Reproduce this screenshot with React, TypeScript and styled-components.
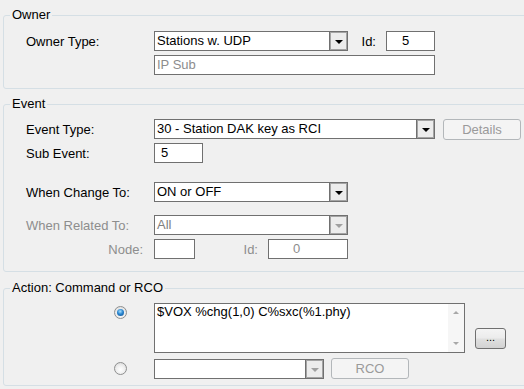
import React from "react";
import styled, { createGlobalStyle } from "styled-components";

const GlobalStyle = createGlobalStyle`
  html, body {
    margin: 0;
    padding: 0;
    background: #f0f0f0;
  }
  body {
    font-family: "Liberation Sans", Arial, sans-serif;
    font-size: 13px;
    color: #000;
    overflow: hidden;
  }
`;

const Page = styled.div`
  width: 524px;
  height: 389px;
  overflow: hidden;
  padding-left: 3px;
  box-sizing: border-box;
`;

const Group = styled.fieldset<{ $top: number; $pt: number; $pb: number }>`
  box-sizing: border-box;
  width: 530px;
  min-inline-size: 0;
  margin: ${(p) => p.$top}px 0 0 0;
  padding: ${(p) => p.$pt}px 0 ${(p) => p.$pb}px 6px;
  border: 1px solid #d5dfe5;
  border-radius: 3px;
`;

const Legend = styled.legend`
  padding: 0 2px;
  line-height: 16px;
  font-size: 13px;
  color: #000;
`;

const Row = styled.div<{ $mt?: number; $h?: number }>`
  display: flex;
  align-items: center;
  height: ${(p) => (p.$h ? `${p.$h}px` : "auto")};
  margin-top: ${(p) => p.$mt ?? 0}px;
`;

const Label = styled.span<{ $disabled?: boolean; $right?: boolean }>`
  flex: none;
  width: 144px;
  box-sizing: border-box;
  padding-left: ${(p) => (p.$right ? 0 : 16)}px;
  padding-right: ${(p) => (p.$right ? 11 : 0)}px;
  text-align: ${(p) => (p.$right ? "right" : "left")};
  color: ${(p) => (p.$disabled ? "#8d8d8d" : "#000")};
  white-space: nowrap;
`;

const SideLabel = styled.span<{ $w: number; $disabled?: boolean }>`
  flex: none;
  width: ${(p) => p.$w}px;
  box-sizing: border-box;
  padding-right: 10px;
  text-align: right;
  color: ${(p) => (p.$disabled ? "#8d8d8d" : "#000")};
`;

const Field = styled.div<{ $w: number; $pl?: number; $muted?: boolean }>`
  flex: none;
  box-sizing: border-box;
  width: ${(p) => p.$w}px;
  height: 20px;
  border: 1px solid #707070;
  background: #fff;
  padding-left: ${(p) => p.$pl ?? 2}px;
  line-height: 18px;
  color: ${(p) => (p.$muted ? "#8d8d8d" : "#000")};
  white-space: nowrap;
`;

const Combo = styled.div<{ $w: number }>`
  flex: none;
  box-sizing: border-box;
  width: ${(p) => p.$w}px;
  height: 20px;
  border: 1px solid #707070;
  background: #fff;
  display: flex;
`;

const ComboText = styled.span<{ $disabled?: boolean }>`
  flex: 1;
  padding-left: 2px;
  line-height: 18px;
  color: ${(p) => (p.$disabled ? "#808080" : "#000")};
  white-space: nowrap;
  overflow: hidden;
`;

const DropButton = styled.span`
  flex: none;
  width: 18px;
  box-sizing: border-box;
  border-left: 1px solid #707070;
  background: #ececec;
  box-shadow: inset 0 0 0 1px #a4a4a4;
  display: flex;
  align-items: center;
  justify-content: center;
  padding-top: 2px;
`;

const Arrow = styled.span<{ $disabled?: boolean }>`
  width: 0;
  height: 0;
  border-left: 4px solid transparent;
  border-right: 4px solid transparent;
  border-top: 4px solid ${(p) => (p.$disabled ? "#a0a0a0" : "#000")};
`;

const Button = styled.div<{ $w: number; $h: number; $disabled?: boolean; $ml?: number }>`
  flex: none;
  box-sizing: border-box;
  width: ${(p) => p.$w}px;
  height: ${(p) => p.$h}px;
  margin-left: ${(p) => p.$ml ?? 0}px;
  border: 1px solid ${(p) => (p.$disabled ? "#b3b7ba" : "#707070")};
  border-radius: 3px;
  background: ${(p) =>
    p.$disabled
      ? "#f4f4f4"
      : "linear-gradient(#f4f4f4, #ececec 45%, #dfdfdf 55%, #d2d2d2)"};
  color: ${(p) => (p.$disabled ? "#9a9a9a" : "#000")};
  display: flex;
  align-items: center;
  justify-content: center;
  font-size: 13px;
`;

const RadioCell = styled.div<{ $top?: boolean }>`
  flex: none;
  width: 144px;
  box-sizing: border-box;
  padding-right: 27px;
  display: flex;
  justify-content: flex-end;
  align-self: ${(p) => (p.$top ? "flex-start" : "center")};
  margin-top: ${(p) => (p.$top ? 3 : 0)}px;
`;

const Radio = styled.span<{ $checked?: boolean }>`
  width: 13px;
  height: 13px;
  box-sizing: border-box;
  border-radius: 50%;
  border: 1px solid #8e8f8f;
  background: radial-gradient(circle at 50% 60%, #ffffff 0%, #f0f0f0 45%, #d4d4d4 100%);
  display: flex;
  align-items: center;
  justify-content: center;

  &::after {
    content: "";
    display: ${(p) => (p.$checked ? "block" : "none")};
    width: 7px;
    height: 7px;
    border-radius: 50%;
    background: radial-gradient(circle at 45% 35%, #a8e0ff 0%, #2a86d0 45%, #0b4c8e 100%);
  }
`;

const Memo = styled.div`
  flex: none;
  box-sizing: border-box;
  width: 311px;
  height: 50px;
  border: 1px solid #707070;
  background: #fff;
  display: flex;
`;

const MemoText = styled.div`
  flex: 1;
  padding: 0 2px;
  line-height: 15px;
  white-space: nowrap;
  overflow: hidden;
`;

const ScrollBar = styled.div`
  flex: none;
  width: 16px;
  background: #f6f6f6;
  display: flex;
  flex-direction: column;
  justify-content: space-between;
`;

const ScrollArrow = styled.div<{ $up?: boolean }>`
  height: 17px;
  display: flex;
  align-items: center;
  justify-content: center;

  &::before {
    content: "";
    width: 0;
    height: 0;
    border-left: 3px solid transparent;
    border-right: 3px solid transparent;
    ${(p) => (p.$up ? "border-bottom" : "border-top")}: 3px solid #a8a8a8;
  }
`;

const DotsButton = styled(Button)`
  align-self: flex-end;
  margin-bottom: 4px;
  font-size: 11px;
  padding-bottom: 3px;
`;

export default function App() {
  return (
    <Page>
      <GlobalStyle />
      <Group $top={7} $pt={8} $pb={13}>
        <Legend>Owner</Legend>
        <Row $h={20}>
          <Label>Owner Type:</Label>
          <Combo $w={194}>
            <ComboText>Stations w. UDP</ComboText>
            <DropButton>
              <Arrow />
            </DropButton>
          </Combo>
          <SideLabel $w={38}>Id:</SideLabel>
          <Field $w={49} $pl={15}>5</Field>
        </Row>
        <Row $h={20} $mt={4}>
          <Label />
          <Field $w={281} $muted>IP Sub</Field>
        </Row>
      </Group>

      <Group $top={7} $pt={7} $pb={12}>
        <Legend>Event</Legend>
        <Row $h={20}>
          <Label>Event Type:</Label>
          <Combo $w={281}>
            <ComboText>30 - Station DAK key as RCI</ComboText>
            <DropButton>
              <Arrow />
            </DropButton>
          </Combo>
          <Button $w={78} $h={21} $ml={8} $disabled>
            Details
          </Button>
        </Row>
        <Row $h={20} $mt={4}>
          <Label>Sub Event:</Label>
          <Field $w={49} $pl={6}>5</Field>
        </Row>
        <Row $h={20} $mt={19}>
          <Label>When Change To:</Label>
          <Combo $w={194}>
            <ComboText>ON or OFF</ComboText>
            <DropButton>
              <Arrow />
            </DropButton>
          </Combo>
        </Row>
        <Row $h={20} $mt={13}>
          <Label $disabled>When Related To:</Label>
          <Combo $w={194}>
            <ComboText $disabled>All</ComboText>
            <DropButton>
              <Arrow $disabled />
            </DropButton>
          </Combo>
        </Row>
        <Row $h={20} $mt={4}>
          <Label $disabled $right>
            Node:
          </Label>
          <Field $w={41} />
          <SideLabel $w={73} $disabled>
            Id:
          </SideLabel>
          <Field $w={80} $pl={24} $muted>
            0
          </Field>
        </Row>
      </Group>

      <Group $top={8} $pt={7} $pb={6}>
        <Legend>Action: Command or RCO</Legend>
        <Row>
          <RadioCell $top>
            <Radio $checked />
          </RadioCell>
          <Memo>
            <MemoText>$VOX %chg(1,0) C%sxc(%1.phy)</MemoText>
            <ScrollBar>
              <ScrollArrow $up />
              <ScrollArrow />
            </ScrollBar>
          </Memo>
          <DotsButton $w={31} $h={21} $ml={10}>
            ...
          </DotsButton>
        </Row>
        <Row $h={21} $mt={5}>
          <RadioCell>
            <Radio />
          </RadioCell>
          <Combo $w={170}>
            <ComboText />
            <DropButton>
              <Arrow $disabled />
            </DropButton>
          </Combo>
          <Button $w={78} $h={21} $ml={7} $disabled>
            RCO
          </Button>
        </Row>
      </Group>
    </Page>
  );
}
